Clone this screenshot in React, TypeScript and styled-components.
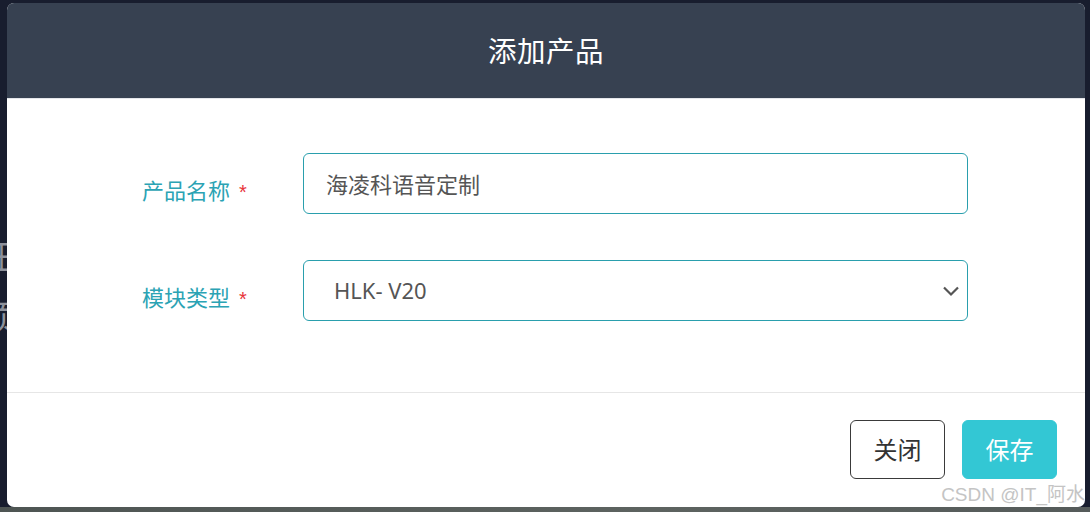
import React from "react";
import styled, { createGlobalStyle } from "styled-components";

const Global = createGlobalStyle`
  html, body { margin: 0; padding: 0; }
  body {
    background: #181d2e;
    font-family: "Noto Sans", "Noto Sans CJK SC", sans-serif;
    overflow: hidden;
  }
`;

const Page = styled.div`
  width: 1090px;
  height: 512px;
  display: flex;
  flex-direction: column;
  background: #181d2e;
  position: relative;
  overflow: hidden;
`;

const Backdrop = styled.div`
  position: absolute;
  left: -20px;
  top: 236px;
  display: flex;
  flex-direction: column;
  gap: 20px;
  font-family: "Noto Sans CJK SC", sans-serif;
  font-size: 34px;
  line-height: 40px;
  color: #8d919b;
`;

const Stage = styled.div`
  flex: 1;
  display: flex;
  padding: 3px 5px 0 7px;
`;

const BottomStrip = styled.div`
  height: 5px;
  background: linear-gradient(90deg, #4e5553, #5d6360 60%, #555b5a);
`;

const Modal = styled.div`
  position: relative;
  flex: 1;
  display: flex;
  flex-direction: column;
  background: #ffffff;
  border-radius: 7px;
  overflow: hidden;
`;

const Header = styled.div`
  height: 96px;
  background: #374151;
  display: flex;
  align-items: center;
  justify-content: center;
  border-bottom: 1px solid #e4e6ea;
  box-sizing: border-box;
`;

const Title = styled.h2`
  margin: 0;
  font-family: "Noto Sans CJK SC", sans-serif;
  font-weight: 400;
  font-size: 28.5px;
  color: #ffffff;
  letter-spacing: 0.5px;
  padding-bottom: 2px;
`;

const Body = styled.div`
  height: 294px;
  box-sizing: border-box;
  padding: 54px 0 0 135px;
  display: flex;
  flex-direction: column;
  gap: 46px;
  border-bottom: 1px solid #e6e6e6;
`;

const Row = styled.div`
  display: flex;
  align-items: flex-start;
`;

const Label = styled.label`
  width: 161px;
  padding-top: 21px;
  font-family: "Noto Sans CJK SC", sans-serif;
  font-size: 22px;
  line-height: 30px;
  color: #2ba3b4;
`;

const Star = styled.span`
  color: #e8343a;
  margin-left: 9px;
  font-family: "Liberation Sans", sans-serif;
  font-size: 20px;
`;

const Field = styled.div<{ $indent: number }>`
  position: relative;
  width: 665px;
  height: 61px;
  box-sizing: border-box;
  border: 1px solid #2a9fad;
  border-radius: 6px;
  display: flex;
  align-items: center;
  padding-left: ${(p) => p.$indent}px;
  font-size: 22px;
  color: #555555;
  font-family: "Noto Sans", "Noto Sans CJK SC", sans-serif;
`;

const FieldText = styled.span`
  padding-bottom: 2px;
`;

const Chevron = styled.svg`
  position: absolute;
  right: 7px;
  top: 24px;
`;

const Footer = styled.div`
  flex: 1;
  display: flex;
  justify-content: flex-end;
  align-items: flex-start;
  padding: 27px 28px 0 0;
  gap: 17px;
`;

const Button = styled.button<{ $primary?: boolean }>`
  width: 95px;
  height: 59px;
  box-sizing: border-box;
  border-radius: 6px;
  border: 1px solid ${(p) => (p.$primary ? "#33c7d4" : "#3a3a3a")};
  background: ${(p) => (p.$primary ? "#33c7d4" : "#ffffff")};
  color: ${(p) => (p.$primary ? "#ffffff" : "#333333")};
  font-family: "Noto Sans CJK SC", sans-serif;
  font-size: 24px;
  padding: 0 0 2px;
  cursor: pointer;
`;

const Watermark = styled.div`
  position: absolute;
  right: 0;
  bottom: 1px;
  font-family: "Liberation Sans", "Noto Sans CJK SC", sans-serif;
  font-size: 19px;
  color: #c4c4c4;
  white-space: nowrap;
`;

export default function App() {
  return (
    <>
      <Global />
      <Page>
        <Backdrop>
          <span>佃</span>
          <span>顶</span>
        </Backdrop>
        <Stage>
          <Modal>
            <Header>
              <Title>添加产品</Title>
            </Header>
            <Body>
              <Row>
                <Label>
                  产品名称<Star>*</Star>
                </Label>
                <Field $indent={22}>
                  <FieldText>海凌科语音定制</FieldText>
                </Field>
              </Row>
              <Row>
                <Label>
                  模块类型<Star>*</Star>
                </Label>
                <Field $indent={30}>
                  <FieldText>HLK- V20</FieldText>
                  <Chevron width="18" height="12" viewBox="0 0 18 12">
                    <path
                      d="M2 2.5 L9 9.5 L16 2.5"
                      fill="none"
                      stroke="#555555"
                      strokeWidth="2.2"
                    />
                  </Chevron>
                </Field>
              </Row>
            </Body>
            <Footer>
              <Button>关闭</Button>
              <Button $primary>保存</Button>
            </Footer>
            <Watermark>CSDN @IT_阿水</Watermark>
          </Modal>
        </Stage>
        <BottomStrip />
      </Page>
    </>
  );
}
